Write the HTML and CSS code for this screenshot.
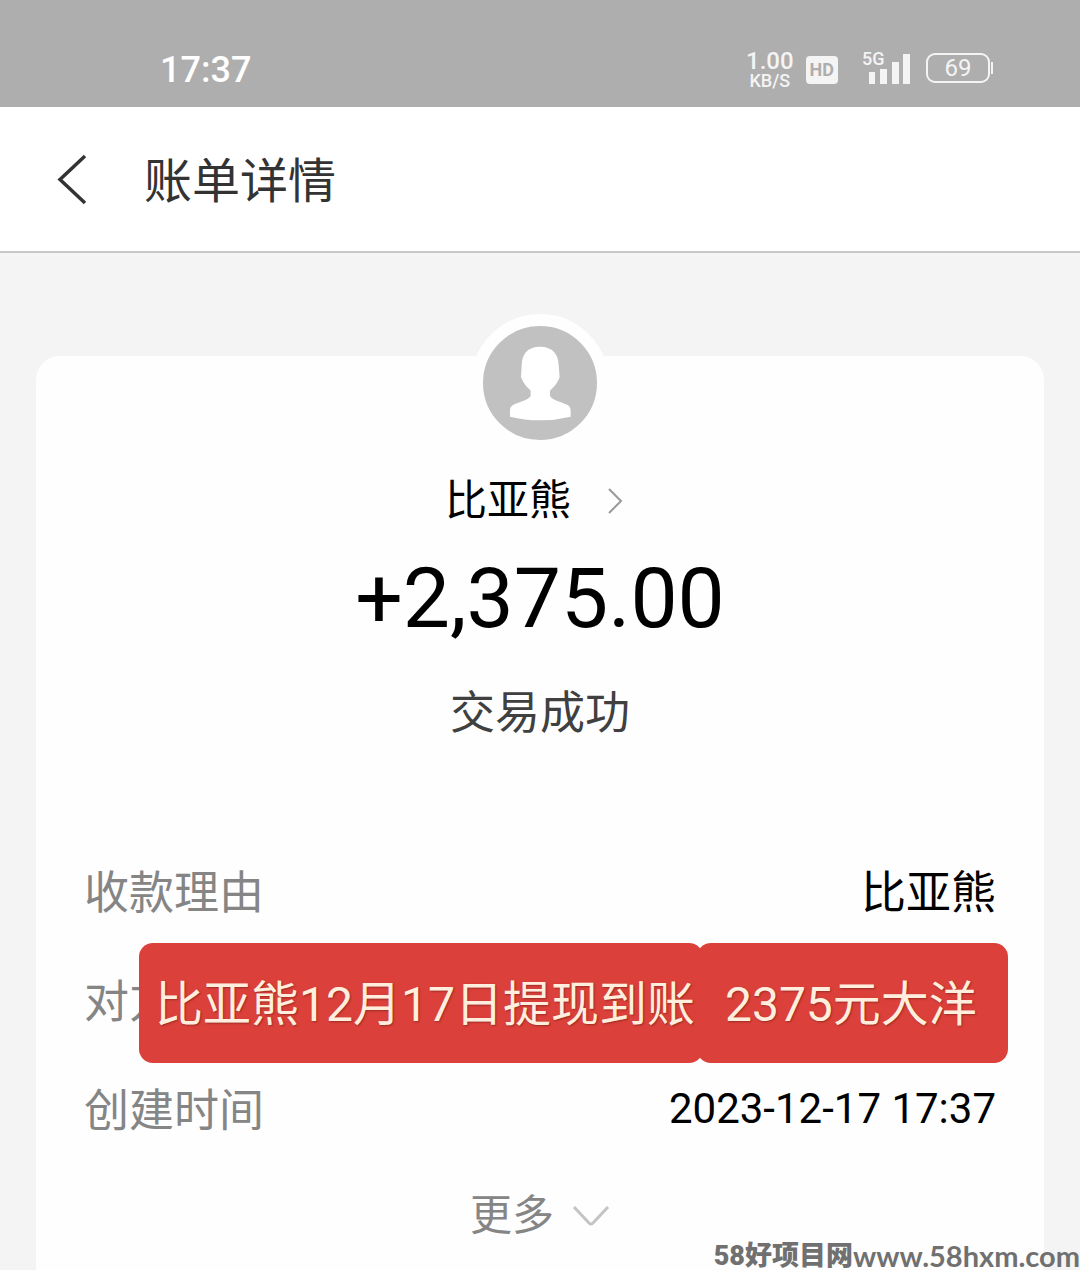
FILE: index.html
```
<!DOCTYPE html>
<html lang="zh-CN">
<head>
    <meta charset="UTF-8">
    <meta name="viewport" content="width=device-width, initial-scale=1.0">
    <title>账单详情</title>
    <link rel="stylesheet" href="styles.css">
</head>
<body>
    <!-- 状态栏 -->
    <div class="status-bar">
        <span class="time">17:37</span>
        <div class="status-icons">
            <div class="speed">
                <span class="speed-num">1.00</span>
                <span class="speed-unit">KB/S</span>
            </div>
            <span class="hd">HD</span>
            <div class="signal">
                <span class="network">5G</span>
                <svg width="48" height="34" viewBox="0 0 48 34">
                    <path d="M7 21h6v12H7zM18 18h7v15h-7zM30 11h7v22h-7zM41 3h7v30h-7z" fill="#f4f4f4"/>
                </svg>
            </div>
            <div class="battery">69</div>
        </div>
    </div>

    <!-- 标题栏 -->
    <header class="header">
        <button class="back" aria-label="返回">
            <svg width="32" height="52" viewBox="0 0 32 52">
                <path d="M29 2L4 25.500L29 49" fill="none" stroke="#333" stroke-width="3.500"/>
            </svg>
        </button>
        <h1>账单详情</h1>
    </header>

    <!-- 账单卡片 -->
    <main class="card">
        <div class="avatar">
            <svg viewBox="0 0 342 342">
                <path d="M171 62C132 62 117 86 116 117L114 154C122 174 133 184 143 194V210C134 226 98 228 84 242Q81 246 81 254V272Q125 283 171 283T263 272V254Q263 246 259 241C243 228 210 226 201 210V194C212 184 222 174 230 154L227 117C226 86 210 62 171 62Z" fill="#fff"/>
            </svg>
        </div>
        <a class="name" href="#">比亚熊
            <svg width="28" height="28" viewBox="0 0 28 28">
                <path d="M2 2L14 14L2 26" fill="none" stroke="#999" stroke-width="2"/>
            </svg>
        </a>
        <p class="amount">+2,375.00</p>
        <p class="state">交易成功</p>

        <div class="details">
            <dl>
                <div class="row">
                    <dt>收款理由</dt>
                    <dd>比亚熊</dd>
                </div>
                <div class="row">
                    <dt>对方账户</dt>
                </div>
                <div class="row">
                    <dt>创建时间</dt>
                    <dd class="date">2023-12-17 17:37</dd>
                </div>
            </dl>
            <!-- 红色标注条 -->
            <div class="banner">
                <span class="tag tag-left">比亚熊12月17日提现到账</span>
                <span class="tag tag-right">2375元大洋</span>
            </div>
        </div>

        <button class="more">更多
            <svg width="38" height="24" viewBox="0 0 38 24">
                <path d="M2 3L17 19Q19 21 21 19L36 3" fill="none" stroke="#c4c4c4" stroke-width="3"/>
            </svg>
        </button>
    </main>

    <div class="watermark"><b>58好项目网</b><span>www.58hxm.com</span></div>
</body>
</html>
```

FILE: styles.css
```
* {
    box-sizing: border-box;
    margin: 0;
    padding: 0;
}

body {
    font-family: Roboto, 'Noto Sans CJK SC', sans-serif;
    background: #f4f4f4;
    color: #000;
    min-height: 100vh;
    display: flex;
    flex-direction: column;
    position: relative;
}

button {
    font: inherit;
    background: none;
    border: none;
    cursor: pointer;
}

svg {
    display: block;
}

/* 状态栏 */
.status-bar {
    background: #aeaeae;
    color: #fff;
    padding: 48px 90px 15px 160px;
    display: flex;
    justify-content: space-between;
    align-items: center;
}

.time {
    font-size: 36px;
    font-weight: 500;
    line-height: 44px;
}

.status-icons {
    display: flex;
    align-items: center;
    gap: 12px;
    color: #f4f4f4;
    font-weight: 500;
}

.speed {
    display: flex;
    flex-direction: column;
    align-items: center;
}

.speed-num {
    font-size: 24px;
    line-height: 22px;
}

.speed-unit {
    font-size: 18px;
    line-height: 18px;
}

.hd {
    background: #f4f4f4;
    color: #aeaeae;
    border-radius: 4px;
    padding: 0 4px;
    font-size: 18px;
    font-weight: 700;
    line-height: 28px;
    margin-right: 12px;
}

.signal {
    position: relative;
    margin-bottom: 4px;
}

.network {
    position: absolute;
    top: 0;
    left: 0;
    font-size: 18px;
    line-height: 16px;
}

.battery {
    position: relative;
    width: 64px;
    border: 2px solid #f4f4f4;
    border-radius: 9px;
    font-size: 24px;
    font-weight: 400;
    line-height: 26px;
    text-align: center;
    margin: 0 0 4px 4px;
}

.battery::after {
    content: '';
    position: absolute;
    right: -5px;
    top: 7px;
    width: 2px;
    height: 12px;
    background: #f4f4f4;
}

/* 标题栏 */
.header {
    background: #fff;
    border-bottom: 2px solid #c8c8c8;
    padding: 35px 56px 33px;
    display: flex;
    align-items: center;
    gap: 56px;
    color: #333;
}

.header h1 {
    padding-top: 4px;
    font-size: 48px;
    font-weight: 400;
    line-height: 72px;
}

/* 卡片 */
.card {
    background: #fefefe;
    border-radius: 24px 24px 0 0;
    margin: 103px 36px 0;
    padding: 0 48px 24px;
    flex: 1;
    display: flex;
    flex-direction: column;
    align-items: center;
}

.avatar {
    width: 138px;
    height: 138px;
    margin-top: -42px;
    border: 12px solid #fefefe;
    border-radius: 50%;
    background: #c1c1c1;
}

.name {
    display: flex;
    align-items: center;
    gap: 36px;
    margin-top: 21px;
    font-size: 42px;
    line-height: 56px;
    color: #000;
    text-decoration: none;
}

.amount {
    margin-top: 20px;
    font-size: 84px;
    line-height: 100px;
}

.state {
    margin-top: 37px;
    font-size: 45px;
    line-height: 56px;
    color: #404040;
}

.details {
    position: relative;
    width: 100%;
    margin-top: 97px;
}

.row {
    display: flex;
    justify-content: space-between;
    font-size: 45px;
    line-height: 109px;
}

.row dt {
    color: #858585;
}

.row .date {
    font-size: 42px;
    line-height: 104px;
}

.banner {
    position: absolute;
    top: 104px;
    left: 55px;
    right: -12px;
    display: flex;
    color: #ffeedd;
    font-size: 48px;
    line-height: 116px;
    white-space: nowrap;
    text-shadow: 1px 1px 2px rgba(110, 30, 20, 0.6);
}

.tag {
    background: #dc403b;
    border-radius: 14px;
    padding: 4px 8px 0 16px;
}

.tag-right {
    flex: 1;
    margin-left: -6px;
    padding-left: 28px;
}

.more {
    display: flex;
    align-items: center;
    gap: 18px;
    margin-top: 22px;
    font-size: 42px;
    line-height: 56px;
    color: #858585;
}

/* 水印 */
.watermark {
    position: absolute;
    right: 0;
    bottom: 0;
    color: #707070;
    font-size: 27px;
    line-height: 28px;
    display: flex;
}

.watermark b {
    font-weight: 900;
}

.watermark span {
    font-family: Lato, sans-serif;
    font-size: 29px;
    font-weight: 700;
}
```
